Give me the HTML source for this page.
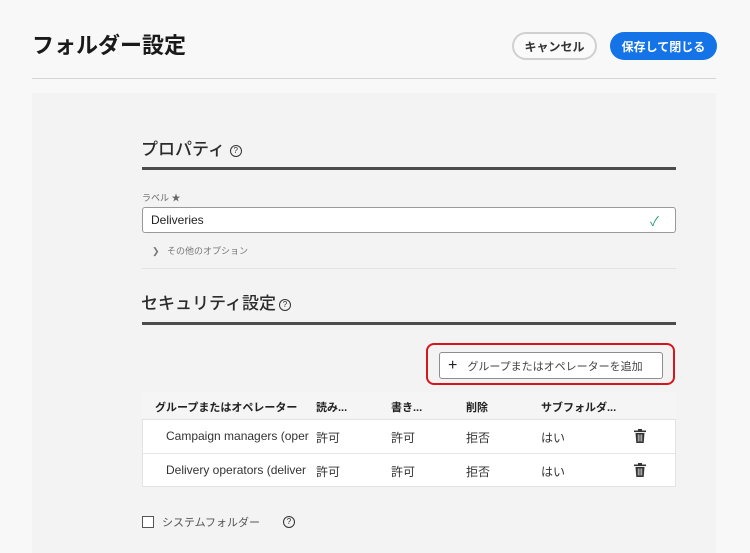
<!DOCTYPE html>
<html><head><meta charset="utf-8"><style>
body{margin:0;width:750px;height:545px;background:#f8f8f8;font-family:"Liberation Sans","Noto Sans CJK JP",sans-serif;position:relative;overflow:hidden;color:#222}
.a{position:absolute}
.btn{position:absolute;border-radius:15px;font-size:12px;font-weight:bold;display:flex;align-items:center;justify-content:center;box-sizing:border-box}
.cell{position:absolute;font-size:12px;color:#333}
.h{font-size:11px!important;font-weight:bold;color:#222!important;top:399px!important}
</style></head><body>
<div class="a" style="left:32px;top:28px;font-size:22px;font-weight:bold;color:#1a1a1a">フォルダー設定</div>
<div class="btn" style="left:512px;top:32px;width:85px;height:28px;border:2px solid #d0d0d0;background:#fafafa;color:#333">キャンセル</div>
<div class="btn" style="left:610px;top:32px;width:107px;height:28px;background:#1473e6;color:#fff">保存して閉じる</div>
<div class="a" style="left:32px;top:78px;width:684px;height:1px;background:#d5d5d5"></div>
<div class="a" style="left:32px;top:93px;width:684px;height:460px;background:#f3f3f3"></div>
<div class="a" style="left:141px;top:135px;font-size:17px;color:#2c2c2c;font-weight:500">プロパティ <span style="border:1.3px solid #333;border-radius:50%;display:inline-block;width:10px;height:10px;line-height:10px;text-align:center;font-size:8px;vertical-align:2px">?</span></div>
<div class="a" style="left:142px;top:167px;width:534px;height:3px;background:#4b4b4b"></div>
<div class="a" style="left:142px;top:191px;font-size:9px;color:#666">ラベル ★</div>
<div class="a" style="left:142px;top:207px;width:534px;height:26px;background:#fff;border:1px solid #999;box-sizing:border-box;border-radius:3px"></div>
<div class="a" style="left:151px;top:213px;font-size:12px;color:#222">Deliveries</div>
<div class="a" style="left:650px;top:211px;font-size:13px;color:#2d9d78">✓</div>
<div class="a" style="left:152px;top:244px;font-size:9px;color:#777">❯&nbsp;&nbsp;&nbsp;その他のオプション</div>
<div class="a" style="left:142px;top:268px;width:534px;height:1px;background:#e3e3e3"></div>
<div class="a" style="left:141px;top:289px;font-size:17px;color:#2c2c2c;font-weight:500">セキュリティ設定<span style="border:1.3px solid #333;border-radius:50%;display:inline-block;width:10px;height:10px;line-height:10px;text-align:center;font-size:8px;vertical-align:2px;margin-left:3px">?</span></div>
<div class="a" style="left:142px;top:322px;width:534px;height:3px;background:#4b4b4b"></div>
<div class="a" style="left:426px;top:343px;width:249px;height:42px;border:2px solid #d7151c;border-radius:8px;box-sizing:border-box"></div>
<div class="a" style="left:439px;top:352px;width:224px;height:27px;border:1px solid #8e8e8e;border-radius:3px;background:#fff;box-sizing:border-box;font-size:11px;color:#444;display:flex;align-items:center;padding-left:8px"><span style="font-size:16px;color:#222;margin-right:10px">+</span>グループまたはオペレーターを追加</div>
<div class="a" style="left:142px;top:392px;width:534px;height:26px;background:#f5f5f5"></div>
<div class="cell h" style="left:155px">グループまたはオペレーター</div>
<div class="cell h" style="left:316px">読み...</div>
<div class="cell h" style="left:391px">書き...</div>
<div class="cell h" style="left:466px">削除</div>
<div class="cell h" style="left:541px">サブフォルダ...</div>
<div class="a" style="left:142px;top:419px;width:534px;height:68px;background:#fff;border:1px solid #e3e3e3;box-sizing:border-box"></div>
<div class="a" style="left:143px;top:453px;width:532px;height:1px;background:#e6e6e6"></div>
<div class="cell" style="left:166px;top:429px">Campaign managers (oper</div>
<div class="cell" style="left:316px;top:429px">許可</div><div class="cell" style="left:391px;top:429px">許可</div><div class="cell" style="left:466px;top:429px">拒否</div><div class="cell" style="left:541px;top:429px">はい</div>
<div class="cell" style="left:166px;top:463px">Delivery operators (deliver</div>
<div class="cell" style="left:316px;top:463px">許可</div><div class="cell" style="left:391px;top:463px">許可</div><div class="cell" style="left:466px;top:463px">拒否</div><div class="cell" style="left:541px;top:463px">はい</div>
<svg class="a" style="left:634px;top:429px" width="12" height="14" viewBox="0 0 12 14"><rect x="0" y="1.5" width="12" height="1.6" fill="#333"/><rect x="4" y="0" width="4" height="2" fill="#333"/><path d="M1.5 4h9l-0.8 10h-7.4z" fill="#333"/><path d="M4.2 5.5v7M6 5.5v7M7.8 5.5v7" stroke="#fff" stroke-width=".7"/></svg>
<svg class="a" style="left:634px;top:463px" width="12" height="14" viewBox="0 0 12 14"><rect x="0" y="1.5" width="12" height="1.6" fill="#333"/><rect x="4" y="0" width="4" height="2" fill="#333"/><path d="M1.5 4h9l-0.8 10h-7.4z" fill="#333"/><path d="M4.2 5.5v7M6 5.5v7M7.8 5.5v7" stroke="#fff" stroke-width=".7"/></svg>
<div class="a" style="left:142px;top:516px;width:10px;height:10px;border:1.5px solid #555;background:#fff"></div>
<div class="a" style="left:162px;top:514px;font-size:11px;color:#555">システムフォルダー</div>
<div class="a" style="left:283px;top:516px;border:1.3px solid #333;border-radius:50%;width:10px;height:10px;line-height:10px;text-align:center;font-size:8px">?</div>
</body></html>
